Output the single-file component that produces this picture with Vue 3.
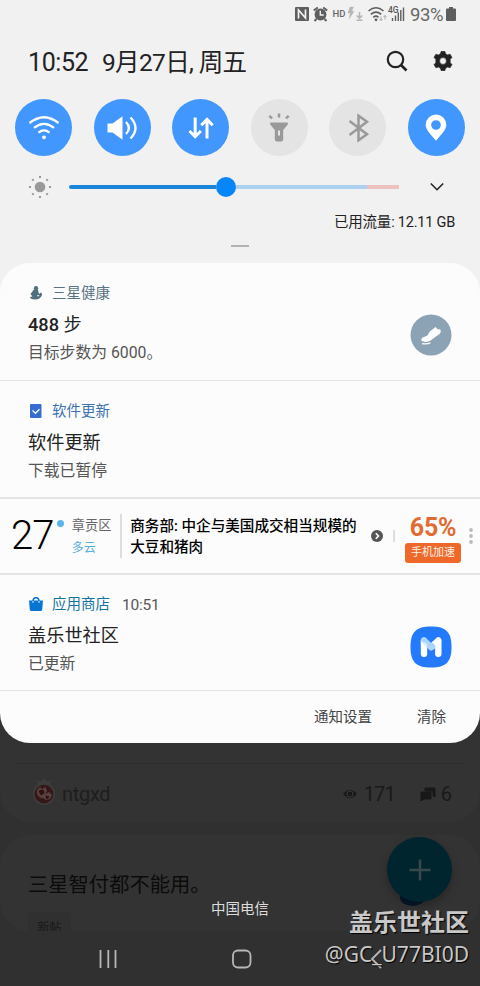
<script setup>
const rays = [0, 45, 90, 135, 180, 225, 270, 315]
const toggles = [
  { name: 'wifi', on: true },
  { name: 'sound', on: true },
  { name: 'data', on: true },
  { name: 'torch', on: false },
  { name: 'bluetooth', on: false },
  { name: 'location', on: true },
]
</script>

<template>
  <main class="phone">
    <header class="status">
      <svg class="status-icons" viewBox="0 0 112 20" width="112" height="20">
        <rect x="0" y="3" width="14" height="14" rx="1" fill="#5e5e5e" />
        <path d="M3.500 14.500V6l7 8V5.500" fill="none" stroke="#f1f1f1" stroke-width="1.700" />
        <circle cx="25.500" cy="10.500" r="5.900" fill="#5e5e5e" />
        <path d="M18.800 6.500l4-3M32.200 6.500l-4-3M21.500 15l-2 2M29.500 15l2 2" stroke="#5e5e5e" stroke-width="2" />
        <path d="M25.300 6.800v4.200h3.500" fill="none" stroke="#f1f1f1" stroke-width="1.400" />
        <text x="37.500" y="13" class="hd">HD</text>
        <path d="M57 3h-2l-2 6h2.300l-1 5.500 4.700-7.300h-2.500l2-4.200z" fill="#b5b5b5" stroke="#b5b5b5" stroke-width=".5" />
        <path d="M64.500 8v6M61.800 11.500l2.700 2.800 2.700-2.800M61.500 16.300h6" fill="none" stroke="#b5b5b5" stroke-width="1.500" />
        <path d="M73.500 7q7.500-6.500 15 0M75.800 10.300q5.200-4.500 10.400 0M78.300 13.300q2.700-2.300 5.200 0" fill="none" stroke="#5e5e5e" stroke-width="1.600" />
        <circle cx="81" cy="15.800" r="1.400" fill="#5e5e5e" />
        <path d="M86 12.500v4M84.500 15l1.500 1.500 1.500-1.500M90 15.500v-4M88.500 13l1.500-1.500 1.500 1.500" fill="none" stroke="#aaa" />
        <text x="93" y="9.300" class="fourg">4G</text>
        <path d="M97.500 14v3M100.500 11.500v5.500M103.300 8.500v8.500M105.800 6v11M108.500 3.500v13.500" stroke="#5e5e5e" stroke-width="1.400" />
      </svg>
      <span class="percent">93%</span>
      <svg viewBox="0 0 10 14" width="10" height="14"><path d="M3 0h4v1.500h2q1 0 1 1V13q0 1-1 1H1q-1 0-1-1V2.500q0-1 1-1h2z" fill="#5e5e5e" /></svg>
    </header>

    <section class="clock-row">
      <span class="time">10:52</span>
      <span class="date">9月27日, 周五</span>
      <svg class="search" viewBox="0 0 22 22" width="22" height="22" fill="none" stroke="#222" stroke-width="2.200">
        <circle cx="9.500" cy="9.500" r="7.700" /><path d="M15 15l5.500 5.500" stroke-width="2.700" />
      </svg>
      <svg viewBox="0 0 20 20" width="20" height="20">
        <path fill="#222" stroke="#222" stroke-width=".6" stroke-linejoin="round" fill-rule="evenodd" d="M8.200.3h3.600l.8 2.500 2 1.100 2.500-.7 1.900 3.200-1.800 1.900v3.400l1.800 1.900-1.900 3.200-2.500-.7-2 1.100-.8 2.500H8.200l-.8-2.500-2-1.100-2.500.7L1 13.600l1.800-1.900V8.300L1 6.400l1.900-3.200 2.500.7 2-1.100zM10 6.600a3.400 3.400 0 100 6.800 3.400 3.400 0 000-6.800z" />
      </svg>
    </section>

    <section class="toggles">
      <div v-for="t in toggles" :key="t.name" class="toggle" :class="{ on: t.on }">
        <svg viewBox="0 0 32 32" width="32" height="32" fill="none" stroke="currentColor" stroke-width="2.300">
          <template v-if="t.name === 'wifi'">
            <path d="M1.500 11q14.500-11.600 29 0M6 15.900q10-8 20 0M10.500 20.600q5.500-4.400 11 0" />
            <circle cx="16" cy="25.300" r="1.900" fill="currentColor" stroke="none" />
          </template>
          <template v-else-if="t.name === 'sound'">
            <path d="M1.500 11.500h5L16.500 4.200v23.600l-10-7.300h-5z" fill="currentColor" stroke="none" />
            <path d="M20 10q5.800 6 0 12M24.500 5.500q10 10.500 0 21" />
          </template>
          <template v-else-if="t.name === 'data'">
            <path d="M10.200 5.500v19M4.500 19l5.700 5.700 5.700-5.700M22 26.500v-19M16.300 13.300L22 7.500l5.700 5.800" stroke-width="3" />
          </template>
          <template v-else-if="t.name === 'torch'">
            <path fill="currentColor" stroke="none" fill-rule="evenodd" d="M7.200 10.500h17.600v2L20.200 18v9.200q0 2.200-2.200 2.200h-4q-2.200 0-2.200-2.200V18l-4.600-5.500zM15 18.500h2v5h-2z" />
            <path d="M16 1.600v3.800M6.300 3.800l2.800 2.600M25.700 3.800l-2.800 2.600" stroke-width="2.500" />
          </template>
          <path v-else-if="t.name === 'bluetooth'" d="M7.500 9L25 22.300l-8.500 6V3.700l8.500 6L7.500 23" stroke-width="2.500" />
          <path v-else fill="currentColor" stroke="none" fill-rule="evenodd" d="M16 2.500A10.300 10.300 0 005.700 12.800c0 5 5 9.800 10.300 16 5.300-6.200 10.300-11 10.300-16A10.300 10.300 0 0016 2.500zm0 5.700a4.800 4.800 0 110 9.600 4.800 4.800 0 010-9.600z" />
        </svg>
      </div>
    </section>

    <section class="brightness">
      <svg viewBox="-12 -12 24 24" width="24" height="24" fill="#999">
        <circle r="5.300" /><rect v-for="r in rays" :key="r" x="-1" y="-11" width="2" height="2" :transform="`rotate(${r})`" />
      </svg>
      <div class="track"><i class="filled"></i><i class="knob"></i><i class="rest"></i><i class="hot"></i></div>
      <svg class="chevron" viewBox="0 0 14 10" width="14" height="10"><path d="M.8 1.500L7 7.700l6.200-6.200" fill="none" stroke="#222" stroke-width="1.600" /></svg>
    </section>
    <p class="usage">已用流量: 12.11 GB</p>
    <div class="handle"></div>

    <div class="panel">
      <article class="notice">
        <div class="copy">
          <h3 class="health">
            <svg viewBox="0 0 14 14" width="14" height="14"><circle cx="7" cy="2.200" r="2.200" fill="#526f7d" /><path d="M4.500 4h4.500l1 4L12 6.500q2 2 .2 4Q10.500 13.700 6 13.500 1 13 1 11l2.500-.5L1.500 8z" fill="#526f7d" /><path d="M8 9l2.500.2-1.500 1.500z" fill="#fcfcfc" /></svg>
            三星健康
          </h3>
          <h2><b>488</b> 步</h2>
          <p>目标步数为 6000。</p>
        </div>
        <svg class="badge" viewBox="0 0 42 42" width="42" height="42">
          <circle cx="21" cy="21" r="20.500" fill="#8ba3b5" />
          <path d="M25.500 13l2.500 2.500 2-.2q1.800 2.200-.5 4.700L20.500 26.500q-2.500 1.800-6 1.300l-3-.7q-.8-2.600.8-3.300l5.200-2.300 2-3.700z" fill="#fff" /><path d="M12 29.600q5 1 8.500-.8" stroke="#fff" stroke-width="1.200" fill="none" />
        </svg>
      </article>

      <article class="notice second">
        <div class="copy">
          <h3 class="update">
            <svg viewBox="0 0 14 14" width="14" height="14"><rect x="1" width="11.500" height="14" rx="1" fill="#376cd0" /><path d="M3.500 6.500l3 2.800 4-4" fill="none" stroke="#fff" stroke-width="1.300" /></svg>
            软件更新
          </h3>
          <h2>软件更新</h2>
          <p>下载已暂停</p>
        </div>
      </article>

      <article class="weather">
        <div class="temp">27</div>
        <i class="degree"></i>
        <div class="place"><span>章贡区</span><em>多云</em></div>
        <div class="news">商务部: 中企与美国成交相当规模的<br>大豆和猪肉</div>
        <svg class="go" viewBox="0 0 12 12" width="12" height="12"><circle cx="6" cy="6" r="6" fill="#555" /><path d="M4.800 3.200L7.500 6 4.800 8.800" fill="none" stroke="#fff" stroke-width="1.600" /></svg>
        <i class="split"></i>
        <div class="boost"><strong>65%</strong><span>手机加速</span></div>
        <svg class="more" viewBox="0 0 4 16" width="4" height="16" fill="#bbb"><circle cx="2" cy="2" r="1.900" /><circle cx="2" cy="8" r="1.900" /><circle cx="2" cy="14" r="1.900" /></svg>
      </article>

      <article class="notice store">
        <div class="copy">
          <h3 class="shop">
            <svg viewBox="0 0 14 14" width="14" height="14"><path d="M0 3.500h14l-.8 9q-.2 1.500-1.700 1.500h-9Q1 14 .8 12.500z" fill="#0875d3" /><path d="M4 4.500q0-3.700 3-3.700t3 3.700" fill="none" stroke="#0875d3" stroke-width="1.500" /><path d="M4 4v1.800M10 4v1.800" stroke="#fcfcfc" /></svg>
            应用商店 <time>10:51</time>
          </h3>
          <h2>盖乐世社区</h2>
          <p>已更新</p>
        </div>
        <svg class="badge" viewBox="0 0 42 42" width="42" height="42">
          <path d="M21 .5C36 .5 41.500 6 41.500 21S36 41.500 21 41.500.5 36 .5 21 6 .5 21 .5z" fill="#247afd" />
          <g fill="none" stroke-width="6.400" stroke-linecap="round" stroke-linejoin="round">
            <path d="M14 15v12.700M28.300 15v12.700M28.300 14.500l-7 6.500" stroke="#fff" />
            <path d="M14 14.500l6.500 6q.8.700 1.600 0" stroke="#a9d5ff" />
          </g>
          <path d="M10.800 14.500v4.500h2l4.400 2.500v-3.500z" fill="#fff" opacity=".55" />
        </svg>
      </article>
      <footer class="actions"><span>通知设置</span><span>清除</span></footer>
    </div>

    <section class="behind">
      <div class="post first">
        <svg class="avatar" viewBox="0 0 24 28" width="24" height="28">
          <path d="M6 6L5 2l4 2 3-4 3 4 4-2-1 4z" fill="#3e3e3e" /><circle cx="12" cy="16" r="11.300" fill="#3d3b3b" /><circle cx="12" cy="16" r="9.300" fill="#351719" />
          <path d="M5 12l3-3 2 2 4-2 1 4-2 3 4-2 3 3-2 4-4 1-3-2-3 1-3-5z" fill="#57413f" /><path d="M7 13l4-1 1 3-3 2zM14 18l3 1-2 2zM7 19l4 3M14 10l3 2" fill="#321012" stroke="#321012" />
        </svg>
        <span class="author">ntgxd</span>
        <svg class="eye" viewBox="0 0 14 10" width="14" height="10"><path d="M0 5q7-8 14 0-7 8-14 0z" fill="#191919" /><circle cx="7" cy="5" r="3" fill="none" stroke="#393939" /></svg>
        <span class="views">171</span>
        <svg class="chat" viewBox="0 0 16 14" width="16" height="14"><path d="M5 1h10v9l-2-1V4H5zM1 5h10v7H4l-3 2z" fill="#181818" stroke="#181818" /></svg>
        <span class="replies">6</span>
      </div>
      <div class="post next">
        <p>三星智付都不能用。</p>
        <span class="tag">新帖</span>
      </div>
      <nav>
        <svg viewBox="0 0 480 24" width="480" height="24" fill="none" stroke="#b7b7b7" stroke-width="1.800">
          <path d="M100.500 3v18M108.300 3v18M115.500 3v18M381 3l-9 9 9 9" /><rect x="233" y="3.500" width="17.500" height="17" rx="5" />
        </svg>
      </nav>
      <div class="fab-tail"></div>
      <div class="fab"><svg viewBox="0 0 22 22" width="22" height="22"><path d="M11 .5v21M.5 11h21" stroke="#38484b" stroke-width="2.500" /></svg></div>
      <div class="carrier">中国电信</div>
      <div class="watermark"><b>盖乐世社区</b><span>@GC_U77BI0D</span></div>
    </section>
  </main>
</template>

<style>
body { background: #303030; }
</style>

<style scoped>
* { box-sizing: border-box; margin: 0; }
.phone { width: 480px; height: 986px; overflow: hidden; background: linear-gradient(#f1f1f1 600px, #303030 600px); font-family: Roboto, "Noto Sans CJK SC", sans-serif; color: #222; }
svg { display: block; flex: none; }
.status { height: 28px; display: flex; align-items: center; padding-left: 295px; }
.hd { font: 500 9.500px Roboto, sans-serif; fill: #666; }
.fourg { font: 500 8.500px Roboto, sans-serif; fill: #555; }
.status-icons { margin-top: -1px; }
.percent { width: 39px; padding-left: 3px; font-size: 18.500px; line-height: 28px; letter-spacing: -.4px; color: #686868; padding-top: 1px; }
.clock-row { height: 71px; display: flex; align-items: center; padding: 0 27px 5px 28px; line-height: 34px; }
.time { width: 74px; font-size: 25px; letter-spacing: -.4px; white-space: nowrap; padding-top: 3px; }
.date { font-size: 24.500px; letter-spacing: -.65px; flex: 1; white-space: nowrap; padding-top: 3px; }
.search { margin-right: 25px; }
.toggles { display: flex; justify-content: space-between; padding: 0 15px; height: 57px; }
.toggle { width: 57px; height: 57px; border-radius: 50%; background: #e4e4e4; color: #999; display: flex; align-items: center; justify-content: center; }
.toggle.on { background: #4297fe; color: #fff; }
.brightness { height: 62px; display: flex; align-items: center; padding-left: 28px; }
.track { width: 330px; height: 20px; margin-left: 17px; display: flex; align-items: center; }
.filled { width: 147px; height: 4px; background: #1b85d9; border-radius: 2px 0 0 2px; }
.knob { width: 20px; height: 20px; border-radius: 50%; background: #0786fa; }
.rest { width: 131px; height: 4px; background: #acd1ef; }
.hot { flex: 1; height: 4px; background: #edc1c0; }
.chevron { margin-left: 31px; }
.usage { height: 28px; margin-top: -9px; padding-right: 25px; text-align: right; font-size: 14.500px; line-height: 28px; letter-spacing: -.22px; }
.handle { width: 18px; height: 2px; background: #b3b3b3; margin: 8px auto 16px 231px; }
.panel { height: 480px; border-radius: 30px; background: #fcfcfc; overflow: hidden; display: flex; flex-direction: column; position: relative; z-index: 1; }
.notice { height: 118px; border-bottom: 1px solid #e4e4e4; display: flex; justify-content: space-between; align-items: flex-start; padding: 19px 28px 0; }
.notice.second { border-bottom: 2px solid #e4e4e4; }
.notice.store { height: 116px; padding-top: 18px; }
h3 { display: flex; align-items: center; height: 24px; font-size: 14.500px; line-height: 24px; font-weight: 400; }
h3 svg { width: 14px; margin: -2px 9px 0 1px; }
.health { color: #5a7483; }
.update { color: #3972b0; }
.shop { color: #13749f; }
time { margin-left: 12px; color: #555; font-size: 15.500px; letter-spacing: -.2px; }
h2 { height: 28px; font-size: 18.200px; line-height: 28px; font-weight: 400; margin-top: 5px; }
h2 b { font-weight: 500; }
.copy p { font-size: 15.800px; line-height: 26px; height: 26px; color: #555; margin-top: 1px; }
.badge { margin-top: 32px; margin-right: 0; }
.store .badge { margin-top: 33px; }
.weather { height: 76px; flex: none; border-bottom: 2px solid #e4e4e4; display: flex; align-items: flex-start; padding: 0 7px 0 11px; }
.temp { width: 46px; font-size: 40px; line-height: 48px; margin-top: 13px; font-weight: 300; color: #000; letter-spacing: -1px; }
.degree { width: 7px; height: 7px; border-radius: 50%; background: #5ab4e9; margin: 21px 8px 0 0; }
.place { width: 50px; height: 44px; margin-top: 15px; border-right: 2px solid #ddd; display: flex; flex-direction: column; color: #666; font-size: 13.200px; line-height: 23px; white-space: nowrap; }
.place em { font-style: normal; font-size: 12px; line-height: 22px; color: #55afd9; }
.news { width: 250px; padding: 17px 0 0 8.500px; font-size: 14.600px; line-height: 20.500px; font-weight: 500; color: #000; white-space: nowrap; }
.go { margin-top: 31px; }
.split { width: 2px; height: 12px; background: #ddd; margin: 31px 10px 0 10px; }
.boost { width: 56px; padding-top: 13px; display: flex; flex-direction: column; align-items: center; }
.boost strong { font-size: 25px; line-height: 31px; font-weight: 700; color: #e16b31; letter-spacing: -.3px; height: 31px; }
.boost span { width: 56px; height: 20px; line-height: 20px; text-align: center; font-size: 11px; color: #fff1e6; background: #ee682a; border-radius: 3px; }
.more { margin: 29px 0 0 8px; }
.actions { height: 52px; display: flex; justify-content: flex-end; gap: 45px; padding: 12px 34px 0; font-size: 14.500px; line-height: 30px; color: #444; }
.behind { height: 273px; margin-top: -30px; position: relative; background: #303030; }
.post { background: #333; border-radius: 0 0 30px 30px; color: #191919; }
.first { height: 109px; display: flex; align-items: center; padding: 52px 28px 0 32px; font-size: 20px; background: linear-gradient(#2e2e2e, #2e2e2e) 15px 50px / 450px 1px no-repeat, #333; }
.avatar { margin-top: -4px; }
.author { margin-left: 6px; flex: 1; letter-spacing: -.3px; color: #1e1e1e; }
.views { margin-left: 7px; width: 56px; letter-spacing: -.9px; }
.replies { margin-left: 5px; }
.next { margin-top: 13px; height: 96px; border-radius: 30px; padding: 34px 28px 0; overflow: hidden; font-size: 20.300px; line-height: 32px; color: #0b0b0b; }
.tag { display: block; width: 43px; height: 30px; margin-top: 11px; text-align: center; font-size: 12px; line-height: 32px; background: #303030; border-radius: 4px; color: #191919; }
.behind nav { margin-top: 16px; }
.fab-tail { position: absolute; left: 400px; top: 176px; width: 25px; height: 17px; border-radius: 50%; background: #07172a; }
.fab { position: absolute; left: 387px; top: 124px; width: 65px; height: 65px; border-radius: 50%; background: #00252f; display: flex; align-items: center; justify-content: center; box-shadow: 0 4px 8px #0004; }
.carrier { position: absolute; left: 0; right: 0; top: 185px; text-align: center; font-size: 14.500px; line-height: 24px; color: #ddd; }
.watermark { position: absolute; right: 11px; top: 194px; display: flex; flex-direction: column; align-items: flex-end; color: #c8c8c8; text-shadow: 1px 1px 1px #000; white-space: nowrap; }
.watermark b { font-size: 24px; line-height: 32px; }
.watermark span { font: 21px/30px "Noto Sans", sans-serif; }
</style>
